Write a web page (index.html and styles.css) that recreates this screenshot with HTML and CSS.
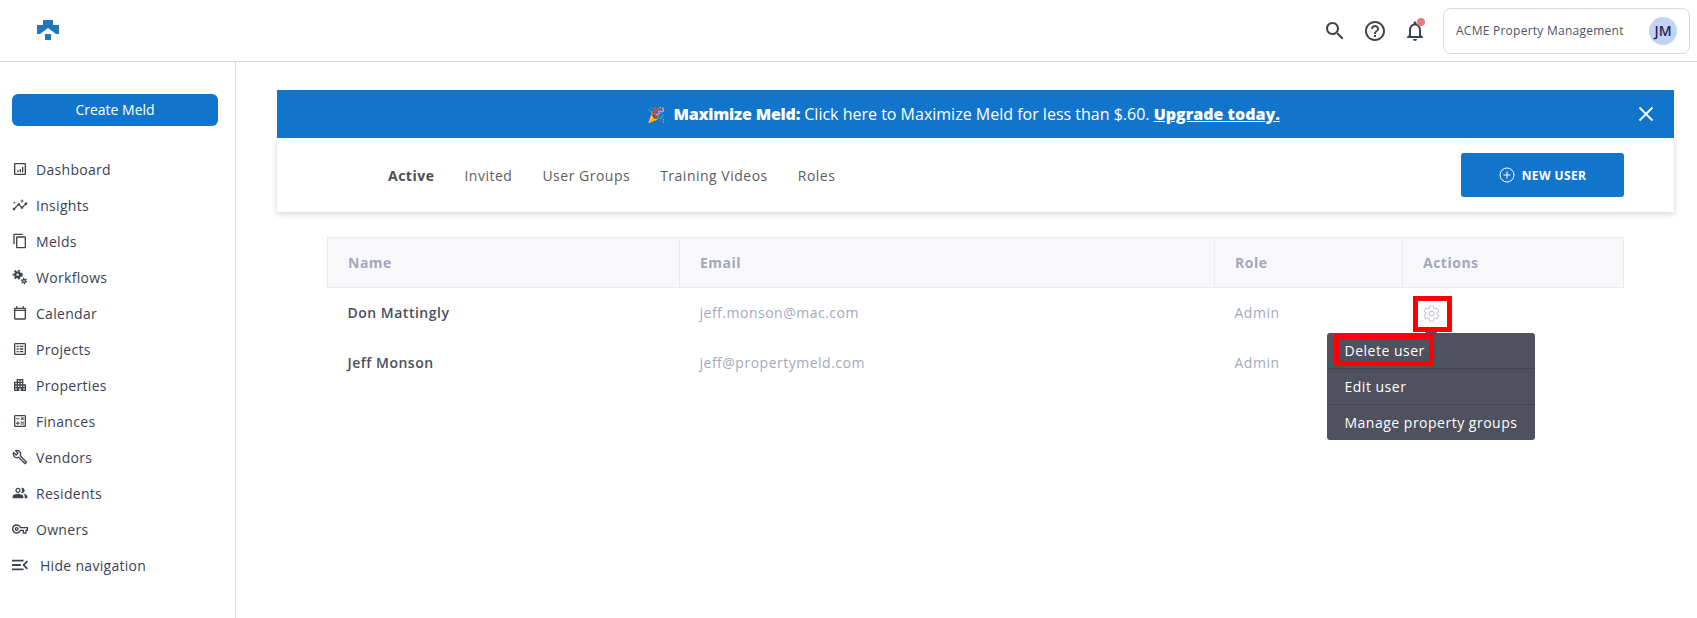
FILE: index.html
```html
<!DOCTYPE html>
<html lang="en">
<head>
<meta charset="utf-8">
<title>Users</title>
<link rel="stylesheet" href="styles.css">
</head>
<body>
<header class="topbar">
  <svg class="logo" viewBox="0 0 22 20" width="22" height="20"><path fill="#2176bd" d="M6 0h10v5h6v9h-3l-8-6-8 6H0V5h6z"/><path fill="#2176bd" d="M8 14h6v6H8z"/></svg>
  <div class="topbar-right">
    <svg class="ticon" viewBox="0 0 24 24" width="24" height="24"><path d="M15.5 14h-.79l-.28-.27C15.41 12.59 16 11.11 16 9.5 16 5.91 13.09 3 9.5 3S3 5.91 3 9.5 5.91 16 9.5 16c1.61 0 3.09-.59 4.23-1.57l.27.28v.79l5 4.99L20.49 19l-4.99-5zm-6 0C7.01 14 5 11.99 5 9.5S7.01 5 9.5 5 14 7.01 14 9.5 11.99 14 9.5 14z"/></svg>
    <svg class="ticon" viewBox="0 0 24 24" width="24" height="24"><path d="M11 18h2v-2h-2v2zm1-16C6.48 2 2 6.48 2 12s4.48 10 10 10 10-4.48 10-10S17.52 2 12 2zm0 18c-4.41 0-8-3.59-8-8s3.59-8 8-8 8 3.59 8 8-3.59 8-8 8zm0-14c-2.21 0-4 1.79-4 4h2c0-1.1.9-2 2-2s2 .9 2 2c0 2-3 1.75-3 5h2c0-2.25 3-2.5 3-5 0-2.21-1.79-4-4-4z"/></svg>
    <span class="bell">
      <svg viewBox="0 0 24 24" width="24" height="24"><path d="M12 22c1.1 0 2-.9 2-2h-4c0 1.1.9 2 2 2zm6-6v-5c0-3.07-1.63-5.64-4.5-6.32V4c0-.83-.67-1.5-1.5-1.5s-1.5.67-1.5 1.5v.68C7.64 5.36 6 7.92 6 11v5l-2 2v1h16v-1l-2-2zm-2 1H8v-6c0-2.48 1.51-4.5 4-4.5s4 2.02 4 4.5v6z"/></svg>
      <i class="dot"></i>
    </span>
    <div class="account">
      <span class="account-name">ACME Property Management</span>
      <span class="avatar">JM</span>
    </div>
  </div>
</header>
<div class="shell">
  <aside class="sidebar">
    <button class="create"><span class="create-label">Create Meld</span></button>
    <nav class="nav">
      <a class="nav-item"><svg viewBox="0 0 24 24" width="16" height="16"><path d="M19 3H5c-1.100 0-2 .9-2 2v14c0 1.100.9 2 2 2h14c1.100 0 2-.9 2-2V5c0-1.100-.9-2-2-2zm0 16H5V5h14v14z"/><path d="M8 14h2v3H8zM11.500 12h2v5h-2zM15 9h2v8h-2z"/></svg>Dashboard</a>
      <a class="nav-item"><svg viewBox="0 0 24 24" width="16" height="16"><path d="M21 8c-1.450 0-2.260 1.440-1.930 2.510l-3.550 3.560c-.3-.09-.74-.09-1.040 0l-2.550-2.550C12.270 10.450 11.460 9 10 9c-1.450 0-2.270 1.440-1.930 2.520l-4.560 4.550C2.440 15.740 1 16.550 1 18c0 1.100.9 2 2 2 1.450 0 2.260-1.440 1.930-2.510l4.550-4.560c.3.09.74.09 1.040 0l2.550 2.550C12.730 16.550 13.540 18 15 18c1.450 0 2.270-1.440 1.930-2.520l3.560-3.550c1.070.33 2.510-.48 2.510-1.930 0-1.100-.9-2-2-2z"/><path d="M15 9l.94-2.070L18 6l-2.060-.93L15 3l-.92 2.070L12 6l2.080.93zM3.500 11L4 9l2-.5L4 8l-.5-2L3 8l-2 .5L3 9z"/></svg>Insights</a>
      <a class="nav-item"><svg viewBox="0 0 24 24" width="16" height="16"><path d="M16 1H4c-1.100 0-2 .9-2 2v14h2V3h12V1zm3 4H8c-1.100 0-2 .9-2 2v14c0 1.100.9 2 2 2h11c1.100 0 2-.9 2-2V7c0-1.100-.9-2-2-2zm0 16H8V7h11v14z"/></svg>Melds</a>
      <a class="nav-item"><svg viewBox="0 0 24 24" width="16" height="16"><circle cx="8.500" cy="8.500" r="3.500" fill="none" stroke="#3f444e" stroke-width="3.500"/><circle cx="8.500" cy="8.500" r="6.300" fill="none" stroke="#3f444e" stroke-width="2.400" stroke-dasharray="3 2.940"/><circle cx="18" cy="18" r="2.200" fill="none" stroke="#3f444e" stroke-width="2"/><circle cx="18" cy="18" r="4" fill="none" stroke="#3f444e" stroke-width="1.800" stroke-dasharray="2 2.190"/></svg>Workflows</a>
      <a class="nav-item"><svg viewBox="0 0 24 24" width="16" height="16"><path d="M19 4h-1V2h-2v2H8V2H6v2H5c-1.100 0-2 .9-2 2v14c0 1.100.9 2 2 2h14c1.100 0 2-.9 2-2V6c0-1.100-.9-2-2-2zm0 16H5V9h14v11zm0-13H5V6h14v1z"/></svg>Calendar</a>
      <a class="nav-item"><svg viewBox="0 0 24 24" width="16" height="16"><path d="M19 3H5c-1.100 0-2 .9-2 2v14c0 1.100.9 2 2 2h14c1.100 0 2-.9 2-2V5c0-1.100-.9-2-2-2zm0 16H5V5h14v14z"/><path d="M7 7h3v2H7zM11.500 7H17v2h-5.500zM7 11h3v2H7zM11.500 11H17v2h-5.500zM7 15h3v2H7zM11.500 15H17v2h-5.500z"/></svg>Projects</a>
      <a class="nav-item"><svg viewBox="0 0 24 24" width="16" height="16"><path d="M17 11V3H7v4H3v14h8v-4h2v4h8V11h-4zM7 19H5v-2h2v2zm0-4H5v-2h2v2zm0-4H5V9h2v2zm4 4H9v-2h2v2zm0-4H9V9h2v2zm0-4H9V5h2v2zm4 8h-2v-2h2v2zm0-4h-2V9h2v2zm0-4h-2V5h2v2zm4 12h-2v-2h2v2zm0-4h-2v-2h2v2z"/></svg>Properties</a>
      <a class="nav-item"><svg viewBox="0 0 24 24" width="16" height="16"><path d="M19 3H5c-1.100 0-2 .9-2 2v14c0 1.100.9 2 2 2h14c1.100 0 2-.9 2-2V5c0-1.100-.9-2-2-2zm0 16H5V5h14v14z"/><path d="M6.250 7.720h5v1.500h-5zM13 15.750h5v1.500h-5zM13 13.250h5v1.500h-5zM8 18h1.500v-2h2v-1.500h-2v-2H8v2H6V16h2zM14.090 10.950l1.410-1.410 1.410 1.410 1.060-1.060-1.410-1.420 1.410-1.410-1.060-1.060-1.410 1.410-1.410-1.410-1.060 1.060 1.410 1.410-1.410 1.420z"/></svg>Finances</a>
      <a class="nav-item"><svg viewBox="0 0 24 24" width="16" height="16"><path d="M22.610 18.990l-9.080-9.080c.93-2.340.45-5.100-1.440-7C9.790.61 6.210.4 3.660 2.260L7.500 6.110 6.080 7.520 2.250 3.690C.39 6.230.6 9.820 2.900 12.110c1.860 1.860 4.570 2.350 6.890 1.480l9.110 9.110c.39.39 1.020.39 1.410 0l2.300-2.300c.4-.38.4-1.010 0-1.410zm-3 1.600l-9.460-9.460c-.61.45-1.290.72-2 .82-1.360.2-2.790-.21-3.830-1.250C3.370 9.760 2.930 8.500 3 7.260l3.090 3.090 4.240-4.240-3.090-3.090c1.240-.07 2.490.37 3.440 1.310 1.080 1.080 1.490 2.570 1.240 3.960-.12.71-.42 1.370-.88 1.960l9.450 9.450-.88.88z"/></svg>Vendors</a>
      <a class="nav-item"><svg viewBox="0 0 24 24" width="16" height="16"><path d="M16.670 13.130C18.040 14.060 19 15.320 19 17v3h4v-3c0-2.180-3.570-3.470-6.330-3.870zM15 12c2.210 0 4-1.790 4-4s-1.790-4-4-4c-.47 0-.91.1-1.330.24C14.500 5.270 15 6.580 15 8s-.5 2.730-1.330 3.760c.42.14.86.24 1.330.24zM9 12c2.210 0 4-1.790 4-4s-1.790-4-4-4-4 1.790-4 4 1.790 4 4 4zm0-6c1.100 0 2 .9 2 2s-.9 2-2 2-2-.9-2-2 .9-2 2-2zM9 13c-2.670 0-8 1.340-8 4v3h16v-3c0-2.660-5.330-4-8-4z"/></svg>Residents</a>
      <a class="nav-item"><svg viewBox="0 0 24 24" width="16" height="16"><path d="M22 19h-6v-4h-2.680c-1.140 2.420-3.600 4-6.320 4-3.860 0-7-3.140-7-7s3.140-7 7-7c2.720 0 5.170 1.580 6.320 4H24v6h-2v4zm-4-2h2v-4h2v-2H11.940l-.23-.67C11.010 8.340 9.110 7 7 7c-2.760 0-5 2.240-5 5s2.240 5 5 5c2.110 0 4.010-1.340 4.710-3.330l.23-.67H18v4zM7 15c-1.650 0-3-1.350-3-3s1.350-3 3-3 3 1.350 3 3-1.350 3-3 3zm0-4c-.55 0-1 .45-1 1s.45 1 1 1 1-.45 1-1-.45-1-1-1z"/></svg>Owners</a>
      <a class="nav-item nav-hide"><svg viewBox="3 4 18 16" width="16" height="16"><path d="M3 18h13v-2H3v2zm0-5h10v-2H3v2zm0-7v2h13V6H3zm18 9.590L17.420 12 21 8.410 19.590 7l-5 5 5 5L21 15.590z"/></svg>Hide navigation</a>
    </nav>
  </aside>
  <main class="content">
    <div class="banner">
      <p class="banner-text"><span class="emoji">🎉</span> <b class="strong">Maximize Meld:</b> Click here to Maximize Meld for less than $.60. <b class="upgrade">Upgrade today.</b></p>
      <svg class="close" viewBox="0 0 16 16" width="16" height="16"><path d="M1.500 1.500l13 13M14.500 1.500l-13 13" stroke="#fff" stroke-width="1.800"/></svg>
    </div>
    <div class="tabbar">
      <ul class="tabs">
        <li class="tab tab-active">Active</li>
        <li class="tab">Invited</li>
        <li class="tab">User Groups</li>
        <li class="tab">Training Videos</li>
        <li class="tab">Roles</li>
      </ul>
      <button class="new-user"><svg viewBox="0 0 16 16" width="16" height="16"><circle cx="8" cy="8" r="7" fill="none" stroke="#fff" stroke-width="1"/><path d="M8 4.500v7M4.500 8h7" stroke="#fff" stroke-width="1"/></svg>NEW USER</button>
    </div>
    <div class="table-wrap">
      <table class="users">
        <thead>
          <tr><th class="col-name">Name</th><th class="col-email">Email</th><th class="col-role">Role</th><th>Actions</th></tr>
        </thead>
        <tbody>
          <tr><td class="name">Don Mattingly</td><td class="muted">jeff.monson@mac.com</td><td class="muted">Admin</td>
            <td class="actions">
              <span class="gear-box"><svg viewBox="0 0 24 24" width="19" height="19"><path fill="none" stroke="#c3c6d4" stroke-width="1.300" d="M19.140 12.940c.04-.3.06-.61.06-.94 0-.32-.02-.64-.07-.94l2.030-1.580c.18-.14.23-.41.12-.61l-1.920-3.320c-.12-.22-.37-.29-.59-.22l-2.390.96c-.5-.38-1.030-.7-1.620-.94l-.36-2.540c-.04-.24-.24-.41-.48-.41h-3.840c-.24 0-.43.17-.47.41l-.36 2.540c-.59.24-1.130.57-1.620.94l-2.390-.96c-.22-.08-.47 0-.59.22L2.740 8.870c-.12.21-.08.47.12.61l2.030 1.580c-.05.3-.09.63-.09.94s.02.64.07.94l-2.030 1.580c-.18.14-.23.41-.12.61l1.920 3.320c.12.22.37.29.59.22l2.390-.96c.5.38 1.030.7 1.620.94l.36 2.540c.05.24.24.41.48.41h3.840c.24 0 .44-.17.47-.41l.36-2.540c.59-.24 1.130-.56 1.620-.94l2.390.96c.22.08.47 0 .59-.22l1.920-3.320c.12-.22.07-.47-.12-.61l-2.010-1.580z"/><circle cx="12" cy="12" r="3" fill="none" stroke="#c3c6d4" stroke-width="1.300"/></svg></span>
              <div class="menu">
                <i class="menu-tip"></i>
                <div class="menu-item menu-delete">Delete user</div>
                <div class="menu-item">Edit user</div>
                <div class="menu-item">Manage property groups</div>
              </div>
            </td></tr>
          <tr><td class="name">Jeff Monson</td><td class="muted">jeff@propertymeld.com</td><td class="muted">Admin</td><td></td></tr>
        </tbody>
      </table>
    </div>
  </main>
</div>
</body>
</html>
```

FILE: styles.css
```css
*, *::before, *::after { box-sizing: border-box; }
html, body { margin: 0; height: 100%; overflow: hidden; }
body { font-family: "Open Sans", sans-serif; color: #3f444e; background: #fff; }
svg { fill: #3f444e; }

.topbar { height: 62px; border-bottom: 1px solid #d3d6da; display: flex; align-items: center; justify-content: space-between; padding: 0 7px 0 37px; }
.logo { display: block; margin-top: -2px; }
.topbar-right { display: flex; align-items: center; }
.ticon { display: block; margin-right: 16px; }
.bell { position: relative; display: block; width: 24px; height: 24px; margin-right: 16px; }
.bell svg { display: block; }
.dot { position: absolute; top: -1px; right: 2px; width: 8px; height: 8px; border-radius: 50%; background: #e57f7f; }
.account { width: 247px; height: 46px; border: 1px solid #d5d9e2; border-radius: 8px; display: flex; align-items: center; justify-content: space-between; padding: 0 12px; }
.account-name { font-size: 12px; letter-spacing: .25px; color: #4a5568; }
.avatar { width: 28px; height: 28px; border-radius: 50%; background: #c3d4f2; color: #23235a; font-size: 14px; font-weight: 600; display: flex; align-items: center; justify-content: center; }

.shell { display: flex; height: 556px; }
.sidebar { width: 236px; flex: none; border-right: 1px solid #d3d6da; padding: 32px 17px 0 12px; }
.create { display: block; width: 206px; height: 32px; border: 0; border-radius: 6px; background: #1275cc; color: #fff; font: 14px "Open Sans", sans-serif; padding: 0 0 2px; }
.nav { margin-top: 25px; }
.nav-item { display: flex; align-items: center; gap: 8px; height: 36px; font-size: 14px; letter-spacing: .3px; color: #3a4256; }
.nav-item svg { flex: none; display: block; }
.nav-hide { gap: 12px; }

.content { flex: 1; padding: 28px 23px 0 41px; min-width: 0; }
.banner { position: relative; height: 48px; background: #1275cc; color: #fff; display: flex; align-items: center; justify-content: center; padding-right: 24px; }
.banner-text { margin: 0; font-size: 16px; white-space: nowrap; }
.strong { font-weight: 800; letter-spacing: -.2px; }
.emoji { font-size: 15px; margin-right: 3px; }
.upgrade { font-weight: 800; text-decoration: underline; }
.close { position: absolute; right: 20px; top: 16px; }
.tabbar { height: 74px; background: #fff; box-shadow: 0 2px 6px rgba(0,0,0,.16); display: flex; align-items: center; justify-content: space-between; padding: 0 50px 0 111px; }
.tabs { list-style: none; display: flex; gap: 30px; margin: 0; padding: 0; }
.tab { font-size: 14px; letter-spacing: .5px; color: #5f5a66; }
.tab-active { font-weight: 700; color: #4a4d57; }
.new-user { width: 163px; height: 44px; border: 0; border-radius: 3px; background: #1275cc; color: #fff; font: 700 12px "Open Sans", sans-serif; display: flex; align-items: center; justify-content: center; gap: 7px; letter-spacing: .4px; }

.table-wrap { padding: 25px 0 0 50px; }
.users { width: 1297px; border-collapse: collapse; table-layout: fixed; font-size: 14px; letter-spacing: .5px; }
.users th { height: 50px; background: #f8f8fb; border: 1px solid #ebecf2; text-align: left; padding: 0 20px; font-weight: 700; color: #a3a8ba; }
.col-name { width: 352px; }
.col-email { width: 535px; }
.col-role { width: 188px; }
.users td { height: 50px; padding: 0 20px; vertical-align: middle; }
.name { font-weight: 600; color: #4a4f5c; }
.muted { color: #a3a9bd; }
.actions { position: relative; }
.gear-box { display: flex; width: 39px; height: 36px; border: 5px solid #f00; padding-right: 2px; align-items: center; justify-content: center; margin: 2px 0 0 -10px; }
.menu { position: absolute; z-index: 2; left: -76px; top: 45px; width: 208px; background: #4f515e; border-radius: 3px; color: #fff; letter-spacing: .5px; }
.menu-tip { position: absolute; left: 98px; top: -2px; width: 12px; height: 4px; background: #4f515e; border-radius: 3px 3px 0 0; }
.menu-item { height: 36px; padding: 0 18px; display: flex; align-items: center; font-size: 14px; white-space: nowrap; border-top: 1px solid #42444f; }
.menu-item:first-of-type { border-top: 0; height: 35px; }
.menu-delete { position: relative; }
.menu-delete::after { content: ""; position: absolute; left: 7px; top: 1px; width: 100px; height: 32px; border: 5px solid #f00; }
```
